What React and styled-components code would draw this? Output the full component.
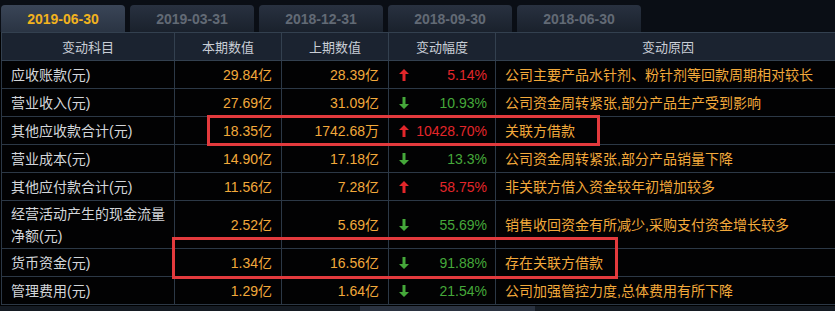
import React from 'react';
import styled, { createGlobalStyle } from 'styled-components';

const GlobalStyle = createGlobalStyle`
	html, body {
		margin: 0;
		padding: 0;
		background: #000;
		overflow: hidden;
	}
	body {
		font-family: 'Liberation Sans', 'Noto Sans CJK SC', sans-serif;
	}
`;

const Page = styled.div`
	position: relative;
	width: 835px;
	height: 311px;
	background: #000;
	overflow: hidden;
`;

const TabBar = styled.div`
	display: flex;
	gap: 5px;
	height: 32px;
	padding-left: 1px;
	align-items: flex-end;
	background: #0a0e15;
`;

const Tab = styled.div`
	width: 124px;
	height: 27px;
	border-radius: 4px 4px 0 0;
	display: flex;
	align-items: center;
	justify-content: center;
	font-family: 'Liberation Sans', sans-serif;
	font-weight: bold;
	font-size: 14px;
	color: ${(p) => (p.active ? '#f2b31e' : '#626a75')};
	background: ${(p) =>
		p.active
			? 'linear-gradient(#3a4557, #2a3443)'
			: 'linear-gradient(#283140, #1a212c)'};
`;

const Table = styled.table`
	margin-left: 1px;
	width: 840px;
	border-collapse: collapse;
	table-layout: fixed;
	font-size: 14px;
`;

const HeadCell = styled.th`
	height: 27px;
	padding: 0;
	background: #1b2330;
	border: 1px solid #33404f;
	color: #c9ced6;
	font-weight: normal;
	font-size: 13px;
	font-family: 'Noto Sans CJK SC', sans-serif;
	text-align: center;
`;

const Row = styled.tr`
	height: ${(p) => (p.tall ? '48px' : '28px')};
`;

const Cell = styled.td`
	padding: 0 ${(p) => (p.align === 'right' ? '9px' : '0')} 0
		${(p) => (p.align === 'right' ? '0' : '9px')};
	border: 1px solid #2c3846;
	background: #020203;
	text-align: ${(p) => p.align || 'left'};
	color: ${(p) => p.color || '#f2a93b'};
	font-family: 'Liberation Sans', 'Noto Sans CJK SC', sans-serif;
	line-height: 22px;
	white-space: ${(p) => (p.wrap ? 'normal' : 'nowrap')};
`;

const NameCell = styled(Cell)`
	color: #d3d6da;
	padding-right: 0;
`;

const ChangeBox = styled.div`
	display: flex;
	align-items: center;
	justify-content: space-between;
	padding: 0 8px 0 10px;
	color: ${(p) => (p.up ? '#e3262a' : '#45a83a')};
`;

const Scrollbar = styled.div`
	height: 7px;
	margin-top: 1px;
	background: #141a22;
	display: flex;
`;

const Thumb = styled.div`
	margin-left: 360px;
	width: 175px;
	background: #2a3240;
`;

const Highlight = styled.div`
	position: absolute;
	border: 3px solid #e33a3d;
	box-sizing: border-box;
	pointer-events: none;
`;

const Arrow = ({ up }) => (
	<svg width="10" height="12" viewBox="0 0 10 12">
		<polygon
			points={up ? '5,0 10,5 6.5,5 6.5,12 3.5,12 3.5,5 0,5' : '5,12 10,7 6.5,7 6.5,0 3.5,0 3.5,7 0,7'}
			fill={up ? '#e3262a' : '#45a83a'}
		/>
	</svg>
);

const tabs = ['2019-06-30', '2019-03-31', '2018-12-31', '2018-09-30', '2018-06-30'];

const rows = [
	['应收账款(元)', '29.84亿', '28.39亿', true, '5.14%', '公司主要产品水针剂、粉针剂等回款周期相对较长'],
	['营业收入(元)', '27.69亿', '31.09亿', false, '10.93%', '公司资金周转紧张,部分产品生产受到影响'],
	['其他应收款合计(元)', '18.35亿', '1742.68万', true, '10428.70%', '关联方借款'],
	['营业成本(元)', '14.90亿', '17.18亿', false, '13.3%', '公司资金周转紧张,部分产品销量下降'],
	['其他应付款合计(元)', '11.56亿', '7.28亿', true, '58.75%', '非关联方借入资金较年初增加较多'],
	['经营活动产生的现金流量净额(元)', '2.52亿', '5.69亿', false, '55.69%', '销售收回资金有所减少,采购支付资金增长较多'],
	['货币资金(元)', '1.34亿', '16.56亿', false, '91.88%', '存在关联方借款'],
	['管理费用(元)', '1.29亿', '1.64亿', false, '21.54%', '公司加强管控力度,总体费用有所下降'],
];

const App = () => {
	return (
		<Page>
			<GlobalStyle />
			<TabBar>
				{tabs.map((t, i) => (
					<Tab key={t} active={i === 0}>
						{t}
					</Tab>
				))}
			</TabBar>
			<Table>
				<colgroup>
					<col style={{ width: 173 }} />
					<col style={{ width: 107 }} />
					<col style={{ width: 107 }} />
					<col style={{ width: 107 }} />
					<col />
				</colgroup>
				<thead>
					<tr>
						<HeadCell>变动科目</HeadCell>
						<HeadCell>本期数值</HeadCell>
						<HeadCell>上期数值</HeadCell>
						<HeadCell>变动幅度</HeadCell>
						<HeadCell>变动原因</HeadCell>
					</tr>
				</thead>
				<tbody>
					{rows.map(([name, cur, prev, up, pct, reason]) => (
						<Row key={name} tall={name.length > 12}>
							<NameCell wrap>{name}</NameCell>
							<Cell align="right">{cur}</Cell>
							<Cell align="right">{prev}</Cell>
							<Cell style={{ padding: 0 }}>
								<ChangeBox up={up}>
									<Arrow up={up} />
									<span>{pct}</span>
								</ChangeBox>
							</Cell>
							<Cell>{reason}</Cell>
						</Row>
					))}
				</tbody>
			</Table>
			<Scrollbar>
				<Thumb />
			</Scrollbar>
			<Highlight style={{ left: 207, top: 115, width: 393, height: 31 }} />
			<Highlight style={{ left: 172, top: 237, width: 446, height: 42 }} />
		</Page>
	);
};

export default App;
